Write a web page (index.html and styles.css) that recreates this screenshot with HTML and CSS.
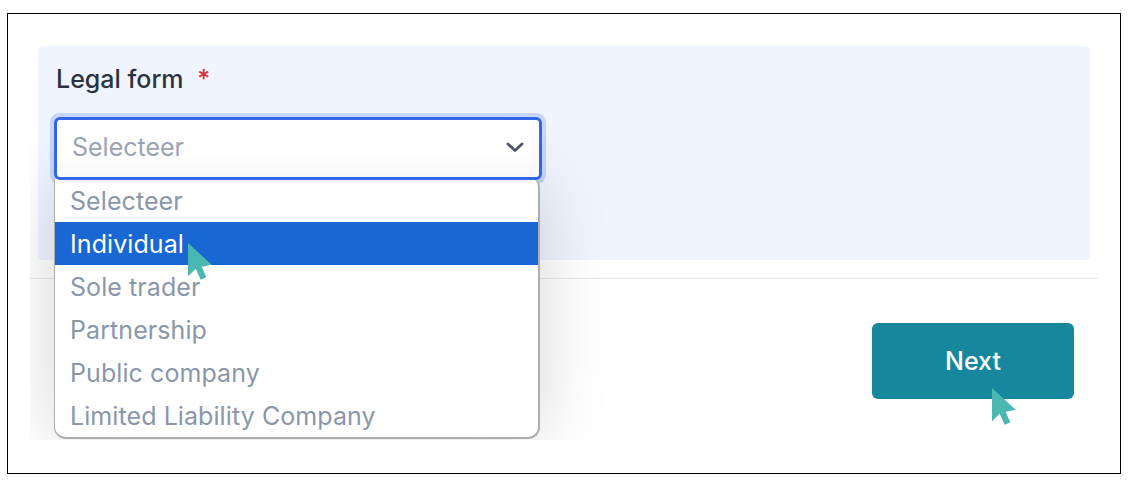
FILE: index.html
```html
<!DOCTYPE html>
<html lang="en">
<head>
  <meta charset="UTF-8" />
  <title>Legal form</title>
  <link rel="stylesheet" href="styles.css">
</head>
<body>
  <div class="frame">
    <main class="card">
      <section class="panel">
        <div class="field-label">Legal form <span class="required">*</span></div>
        <div class="select-wrap">
          <div class="select-box">
            <span>Selecteer</span>
            <svg class="chevron" width="18" height="12" viewBox="0 0 18 12">
              <path d="M2 3l7 6.5L16 3" fill="none" stroke="#4b5563" stroke-width="2.8" stroke-linecap="round" stroke-linejoin="round"/>
            </svg>
          </div>
          <ul class="options">
            <li>Selecteer</li>
            <li class="active">Individual</li>
            <li>Sole trader</li>
            <li>Partnership</li>
            <li>Public company</li>
            <li>Limited Liability Company</li>
          </ul>
        </div>
      </section>
      <div class="actions">
        <button class="next-btn">Next</button>
      </div>
    </main>
    <svg class="cursor cursor-option" width="24" height="37" viewBox="0 0 24 37">
      <path d="M0 0L23.7 21.7 13.7 23.7 18.3 34.3 12.7 36.7 7.7 25.7 0 33.3Z" fill="#4ab8b0"/>
    </svg>
    <svg class="cursor cursor-next" width="24" height="37" viewBox="0 0 24 37">
      <path d="M0 0L23.7 21.7 13.7 23.7 18.3 34.3 12.7 36.7 7.7 25.7 0 33.3Z" fill="#4ab8b0"/>
    </svg>
  </div>
</body>
</html>
```

FILE: styles.css
```css
* { box-sizing: border-box; }

body {
  margin: 13px 0 0 7px;
  font-family: Inter, 'Liberation Sans', sans-serif;
  background: #fff;
}

.frame {
  position: relative;
  width: 1114px;
  height: 461px;
  border: 1px solid #000;
  padding: 16px 0 0 22px;
}

.card {
  width: 1068px;
  height: 410px;
  padding-top: 16px;
  overflow: hidden;
}

.panel {
  width: 1052px;
  height: 214px;
  margin-left: 8px;
  padding: 18px 0 0 18px;
  background: #f0f4ff;
  border-radius: 4px;
}

.field-label {
  font-size: 25px;
  line-height: 30px;
  font-weight: 500;
  color: #2b3340;
}

.required {
  margin-left: 7px;
  color: #dc2f3c;
}

.select-wrap {
  position: relative;
  width: 488px;
  margin-top: 23px;
  margin-left: -2px;
}

/* focus ring sits under the open list */
.select-wrap::before {
  content: "";
  position: absolute;
  top: -4px;
  left: -4px;
  width: 496px;
  height: 71px;
  background: #c6d5fb;
  border-radius: 9px;
}

.select-box {
  position: relative;
  z-index: 2;
  display: flex;
  justify-content: space-between;
  align-items: center;
  width: 488px;
  height: 63px;
  padding: 0 15px 4px;
  background: linear-gradient(#fff 60%, #f8f8f8);
  border: 3px solid #3366e6;
  border-radius: 6px;
  font-size: 25px;
  color: #9aa3b2;
}

.options {
  position: absolute;
  z-index: 1;
  top: 62px;
  left: 0;
  width: 486px;
  margin: 0;
  padding: 0;
  list-style: none;
  background: #fff;
  border: 1px solid #aeaeae;
  border-width: 0 2px 2px 1px;
  border-radius: 0 8px 12px 12px;
  overflow: hidden;
  box-shadow: 0 0 70px rgba(0, 0, 0, 0.16);
  font-size: 25px;
  letter-spacing: 0.08px;
  color: #8a96aa;
}

.options li {
  height: 43px;
  line-height: 45px;
  padding-left: 15px;
}

.options .active {
  background: #1967d2;
  color: #fff;
}

.actions {
  display: flex;
  justify-content: flex-end;
  height: 150px;
  margin-top: 18px;
  padding: 44px 24px 0 0;
  border-top: 1px solid #e5e7eb;
}

.next-btn {
  width: 202px;
  height: 76px;
  background: #17879d;
  color: #fff;
  border: none;
  border-radius: 6px;
  font-family: inherit;
  font-size: 25px;
  font-weight: 500;
}

.cursor {
  position: absolute;
  z-index: 3;
}

.cursor-option {
  left: 180px;
  top: 229px;
}

.cursor-next {
  left: 984px;
  top: 374px;
}
```
